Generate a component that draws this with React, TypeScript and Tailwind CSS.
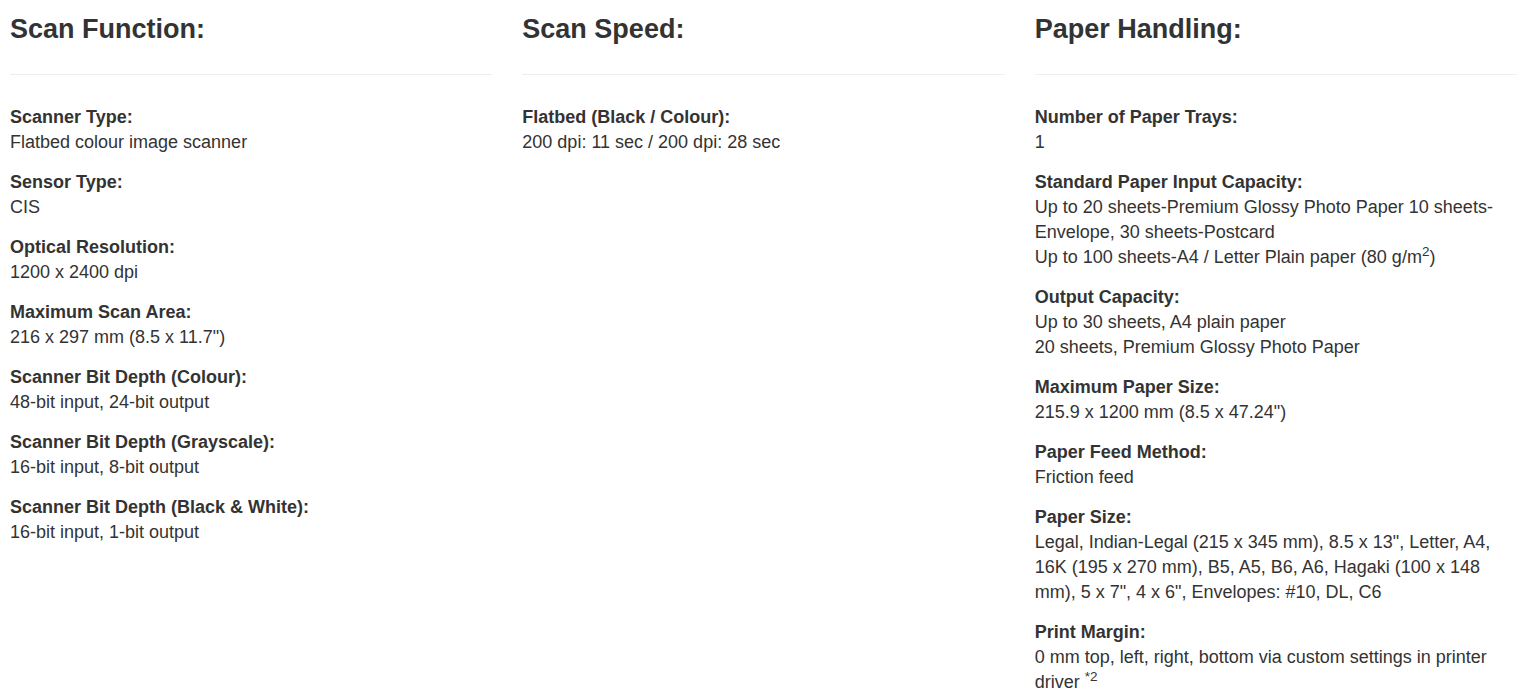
import React from "react";

type Item = { label: string; value: React.ReactNode };

const col1: Item[] = [
  { label: "Scanner Type:", value: "Flatbed colour image scanner" },
  { label: "Sensor Type:", value: "CIS" },
  { label: "Optical Resolution:", value: "1200 x 2400 dpi" },
  { label: "Maximum Scan Area:", value: '216 x 297 mm (8.5 x 11.7")' },
  { label: "Scanner Bit Depth (Colour):", value: "48-bit input, 24-bit output" },
  { label: "Scanner Bit Depth (Grayscale):", value: "16-bit input, 8-bit output" },
  { label: "Scanner Bit Depth (Black & White):", value: "16-bit input, 1-bit output" },
];

const col2: Item[] = [
  { label: "Flatbed (Black / Colour):", value: "200 dpi: 11 sec / 200 dpi: 28 sec" },
];

const col3: Item[] = [
  { label: "Number of Paper Trays:", value: "1" },
  {
    label: "Standard Paper Input Capacity:",
    value: (
      <>
        Up to 20 sheets-Premium Glossy Photo Paper 10 sheets-Envelope, 30 sheets-Postcard
        <br />
        Up to 100 sheets-A4 / Letter Plain paper (80 g/m
        <sup className="text-[0.75em] leading-none relative -top-[0.5em] align-baseline">2</sup>)
      </>
    ),
  },
  {
    label: "Output Capacity:",
    value: (
      <>
        Up to 30 sheets, A4 plain paper
        <br />
        20 sheets, Premium Glossy Photo Paper
      </>
    ),
  },
  { label: "Maximum Paper Size:", value: '215.9 x 1200 mm (8.5 x 47.24")' },
  { label: "Paper Feed Method:", value: "Friction feed" },
  {
    label: "Paper Size:",
    value:
      'Legal, Indian-Legal (215 x 345 mm), 8.5 x 13", Letter, A4, 16K (195 x 270 mm), B5, A5, B6, A6, Hagaki (100 x 148 mm), 5 x 7", 4 x 6", Envelopes: #10, DL, C6',
  },
  {
    label: "Print Margin:",
    value: (
      <>
        0 mm top, left, right, bottom via custom settings in printer driver{" "}
        <sup className="text-[0.75em] leading-none relative -top-[0.5em] align-baseline">*2</sup>
      </>
    ),
  },
];

function Column({ title, items }: { title: string; items: Item[] }) {
  return (
    <div className="min-w-0">
      <h2 className="mt-[11px] text-[27px] leading-[36px] font-bold">{title}</h2>
      <div className="mt-[27px] h-px bg-[#eeeeee]" />
      <div className="mt-[30px] flex flex-col gap-[15px]">
        {items.map((it) => (
          <div key={it.label}>
            <div className="font-bold">{it.label}</div>
            <div>{it.value}</div>
          </div>
        ))}
      </div>
    </div>
  );
}

export default function App() {
  return (
    <div
      className="bg-white text-[#333333] text-[18px] leading-[25px] pl-[10px] pr-[6px] h-[700px] overflow-hidden"
      style={{ fontFamily: '"Liberation Sans", Arial, sans-serif' }}
    >
      <div className="grid grid-cols-3 gap-x-[30px]">
        <Column title="Scan Function:" items={col1} />
        <Column title="Scan Speed:" items={col2} />
        <Column title="Paper Handling:" items={col3} />
      </div>
    </div>
  );
}
